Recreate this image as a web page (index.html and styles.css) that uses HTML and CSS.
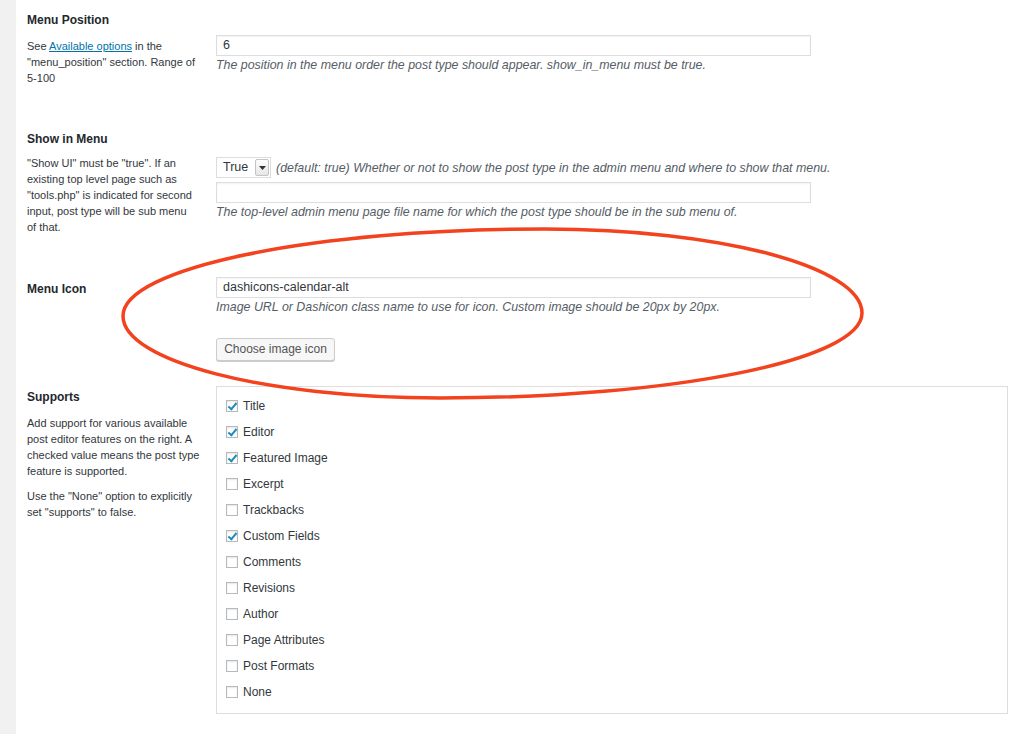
FILE: index.html
```html
<!DOCTYPE html>
<html>
<head>
<meta charset="utf-8">
<link rel="stylesheet" href="styles.css">
</head>
<body>
<div class="page">
  <div class="strip"></div>
  <div class="main">
    <div class="row row-position">
      <div class="label-col">
        <div class="label">Menu Position</div>
        <div class="help">See <a href="#" class="link">Available options</a> in the "menu_position" section. Range of 5-100</div>
      </div>
      <div class="field-col field-position">
        <div class="input">6</div>
        <div class="desc">The position in the menu order the post type should appear. show_in_menu must be true.</div>
      </div>
    </div>

    <div class="row row-show">
      <div class="label-col">
        <div class="label">Show in Menu</div>
        <div class="help help-show">"Show UI" must be "true". If an existing top level page such as "tools.php" is indicated for second input, post type will be sub menu of that.</div>
      </div>
      <div class="field-col field-show">
        <div class="select-line">
          <div class="select"><span class="select-text">True</span><span class="select-arrow"><svg width="7" height="4" viewBox="0 0 7 4"><path d="M0 0h7L3.5 4z" fill="#333"/></svg></span></div>
          <span class="desc inline">(default: true) Whether or not to show the post type in the admin menu and where to show that menu.</span>
        </div>
        <div class="input input-empty"></div>
        <div class="desc">The top-level admin menu page file name for which the post type should be in the sub menu of.</div>
      </div>
    </div>

    <div class="row row-icon">
      <div class="label-col label-icon">
        <div class="label">Menu Icon</div>
      </div>
      <div class="field-col">
        <div class="input">dashicons-calendar-alt</div>
        <div class="desc">Image URL or Dashicon class name to use for icon. Custom image should be 20px by 20px.</div>
        <div class="button">Choose image icon</div>
      </div>
    </div>

    <div class="row row-supports">
      <div class="label-col label-supports">
        <div class="label">Supports</div>
        <div class="help">Add support for various available post editor features on the right. A checked value means the post type feature is supported.</div>
        <div class="help help-gap">Use the "None" option to explicitly set "supports" to false.</div>
      </div>
      <div class="field-col">
        <div class="box">
          <div class="check-row"><span class="cb checked"></span><span>Title</span></div>
          <div class="check-row"><span class="cb checked"></span><span>Editor</span></div>
          <div class="check-row"><span class="cb checked"></span><span>Featured Image</span></div>
          <div class="check-row"><span class="cb"></span><span>Excerpt</span></div>
          <div class="check-row"><span class="cb"></span><span>Trackbacks</span></div>
          <div class="check-row"><span class="cb checked"></span><span>Custom Fields</span></div>
          <div class="check-row"><span class="cb"></span><span>Comments</span></div>
          <div class="check-row"><span class="cb"></span><span>Revisions</span></div>
          <div class="check-row"><span class="cb"></span><span>Author</span></div>
          <div class="check-row"><span class="cb"></span><span>Page Attributes</span></div>
          <div class="check-row"><span class="cb"></span><span>Post Formats</span></div>
          <div class="check-row"><span class="cb"></span><span>None</span></div>
        </div>
      </div>
    </div>
  </div>
  <svg class="annotation" width="1024" height="734" viewBox="0 0 1024 734">
    <path d="M123 316 C123 268 312 229 545 229 C720 229 862 267 862 313 C862 360 673 398 440 398 C265 398 123 361 123 316 Z" fill="none" stroke="#f2421e" stroke-width="3.5"/>
  </svg>
</div>
</body>
</html>
```

FILE: styles.css
```css
html, body {
  margin: 0;
  padding: 0;
  background: #fff;
}
body {
  font-family: "Liberation Sans", Arial, sans-serif;
  color: #23282d;
}
.page {
  position: relative;
  display: flex;
  width: 1024px;
  height: 734px;
  overflow: hidden;
}
.strip {
  width: 16px;
  flex: none;
  background: #f1f1f1;
}
.main {
  flex: 1;
  padding-left: 11px;
  padding-right: 16px;
}
.row {
  display: grid;
  grid-template-columns: 189px 1fr;
}
.row-position {
  margin-top: 13px;
  height: 119px;
}
.row-show {
  height: 145px;
}
.row-icon {
  height: 109px;
}
.label {
  font-size: 12px;
  font-weight: bold;
  line-height: 15px;
  color: #23282d;
}
.help {
  margin-top: 10px;
  font-size: 11px;
  line-height: 16px;
  color: #32373c;
  padding-right: 12px;
}
.help-show {
  padding-right: 19px;
}
.help-gap {
  margin-top: 9px;
}
.row-show .help {
  margin-top: 8px;
}
.link {
  color: #0073aa;
  text-decoration: underline;
}
.field-position {
  padding-top: 22px;
}
.field-show {
  padding-top: 25px;
}
.label-icon {
  padding-top: 5px;
}
.label-supports {
  padding-top: 4px;
}
.input {
  width: 595px;
  height: 21px;
  box-sizing: border-box;
  border: 1px solid #ddd;
  box-shadow: inset 0 1px 2px rgba(0,0,0,0.05);
  padding: 0 6px;
  font-size: 12.5px;
  line-height: 19px;
  color: #32373c;
  background: #fff;
}
.input-empty {
  margin-top: 4px;
}
.desc {
  font-size: 12.4px;
  font-style: italic;
  line-height: 16px;
  color: #555d66;
  margin-top: 1px;
}
.desc.inline {
  margin-top: 0;
}
.select-line {
  display: flex;
  align-items: center;
  gap: 5px;
  height: 21px;
}
.select {
  display: flex;
  width: 55px;
  height: 21px;
  box-sizing: border-box;
  border: 1px solid #ddd;
  background: #fff;
}
.select-text {
  flex: 1;
  font-size: 12.5px;
  line-height: 19px;
  padding-left: 6px;
  color: #32373c;
}
.select-arrow {
  width: 12px;
  margin: 1px 1px 1px 0;
  border: 1px solid #c4c4c4;
  border-radius: 2px;
  background: linear-gradient(#fdfdfd, #e6e6e6);
  display: flex;
  align-items: center;
  justify-content: center;
}
.button {
  margin-top: 23px;
  width: 119px;
  height: 23px;
  box-sizing: border-box;
  border: 1px solid #ccc;
  border-radius: 3px;
  background: #f7f7f7;
  box-shadow: 0 1px 0 #ccc;
  font-size: 12px;
  line-height: 21px;
  text-align: center;
  color: #555;
}
.box {
  width: 792px;
  box-sizing: border-box;
  border: 1px solid #ddd;
  padding: 6px 9px 8px;
}
.check-row {
  display: flex;
  align-items: center;
  gap: 5px;
  height: 26px;
  font-size: 12px;
  color: #32373c;
}
.cb {
  width: 12px;
  height: 12px;
  box-sizing: border-box;
  border: 1px solid #b4b9be;
  background: #fff;
  box-shadow: inset 0 1px 2px rgba(0,0,0,0.1);
  position: relative;
}
.cb.checked::after {
  content: "";
  position: absolute;
  left: 3px;
  top: 0px;
  width: 3px;
  height: 7px;
  border-right: 2px solid #1e8cbe;
  border-bottom: 2px solid #1e8cbe;
  transform: rotate(40deg);
}
.annotation {
  position: absolute;
  left: 0;
  top: 0;
  pointer-events: none;
}
```
